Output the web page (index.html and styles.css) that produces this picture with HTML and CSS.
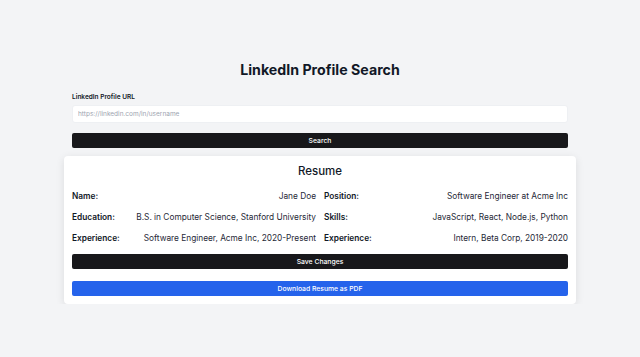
FILE: index.html
```html
<!DOCTYPE html>
<html lang="en">
<head>
	<meta charset="UTF-8">
	<meta name="viewport" content="width=device-width, initial-scale=1.0">
	<title>LinkedIn Profile Search</title>
	<link rel="stylesheet" href="styles.css">
</head>
<body>
	<div class="page">
		<h1 class="title">LinkedIn Profile Search</h1>

		<form class="search-form" onsubmit="return false">
			<label for="profile-url">LinkedIn Profile URL</label>
			<input type="text" id="profile-url" placeholder="https://linkedin.com/in/username">
			<button type="submit" class="btn btn-dark">Search</button>
		</form>

		<div class="resume-card">
			<h2>Resume</h2>
			<div class="resume-grid">
				<div class="field"><span class="field-label">Name:</span><span class="field-value">Jane Doe</span></div>
				<div class="field"><span class="field-label">Position:</span><span class="field-value">Software Engineer at Acme Inc</span></div>
				<div class="field"><span class="field-label">Education:</span><span class="field-value">B.S. in Computer Science, Stanford University</span></div>
				<div class="field"><span class="field-label">Skills:</span><span class="field-value">JavaScript, React, Node.js, Python</span></div>
				<div class="field"><span class="field-label">Experience:</span><span class="field-value">Software Engineer, Acme Inc, 2020-Present</span></div>
				<div class="field"><span class="field-label">Experience:</span><span class="field-value">Intern, Beta Corp, 2019-2020</span></div>
			</div>
			<button class="btn btn-dark">Save Changes</button>
			<button class="btn btn-blue">Download Resume as PDF</button>
		</div>
	</div>
</body>
</html>
```

FILE: styles.css
```css
html, body {
	margin: 0;
	padding: 0;
	background-color: #f3f4f6;
	font-family: Inter, "Noto Sans", sans-serif;
	color: #111827;
}

.page {
	width: 512px;
	margin: 0 auto;
	padding-top: 61px;
}

.title {
	margin: 0 0 14px;
	text-align: center;
	font-size: 14.2px;
	font-weight: 700;
	line-height: 18px;
}

.search-form {
	display: flex;
	flex-direction: column;
	padding: 0 8px;
}

.search-form label {
	font-size: 6.5px;
	font-weight: 600;
	line-height: 9px;
	margin-bottom: 3px;
}

.search-form input {
	height: 18px;
	box-sizing: border-box;
	border: 1px solid #eef0f3;
	border-radius: 3px;
	background: #fff;
	padding: 0 5px;
	font-family: inherit;
	font-size: 6.5px;
	margin-bottom: 10px;
}

.search-form input::placeholder {
	color: #9ca3af;
}

.btn {
	display: block;
	width: 100%;
	height: 15px;
	border: none;
	border-radius: 2px;
	color: #fff;
	font-family: inherit;
	font-size: 6.8px;
	font-weight: 500;
	padding: 0;
}

.btn-dark {
	background-color: #18181b;
}

.btn-blue {
	background-color: #2563eb;
	margin-top: 12px;
}

.search-form .btn {
	margin-bottom: 8px;
}

.resume-card {
	background: #fff;
	border-radius: 4px;
	box-shadow: 0 2px 8px rgba(0, 0, 0, 0.1);
	padding: 8px 8px 8px;
}

.resume-card h2 {
	margin: 0 0 12px;
	text-align: center;
	font-size: 11.5px;
	font-weight: 500;
	line-height: 14px;
}

.resume-grid {
	display: grid;
	grid-template-columns: 1fr 1fr;
	column-gap: 8px;
	row-gap: 8.5px;
	margin-bottom: 9.5px;
}

.field {
	display: flex;
	justify-content: space-between;
	font-size: 8.3px;
	line-height: 12.5px;
}

.field-label {
	font-weight: 600;
}

.field-value {
	color: #1f2937;
}
```
